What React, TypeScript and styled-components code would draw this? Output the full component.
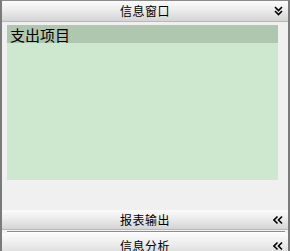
import React from "react";
import styled, { createGlobalStyle } from "styled-components";

const Global = createGlobalStyle`
  html, body { margin: 0; padding: 0; background: #f0f0f0; }
  body { font-family: "Noto Sans CJK SC", "Noto Sans", sans-serif; }
`;

const Frame = styled.div`
  width: 290px;
  height: 251px;
  box-sizing: border-box;
  border-left: 2px solid #7a7a7a;
  border-right: 2px solid #7a7a7a;
  border-top: 1px solid #8a8a8a;
  display: flex;
  flex-direction: column;
  overflow: hidden;
  background: #f0f0f0;
`;

const Header = styled.div<{ $h: number }>`
  position: relative;
  height: ${(p) => p.$h}px;
  flex: none;
  display: flex;
  align-items: center;
  justify-content: center;
  background: linear-gradient(to bottom, #fbfbfb 0%, #ececec 45%, #d4d4d4 100%);
  border-bottom: 1px solid #b8b8b8;
  font-size: 12px;
  line-height: 1;
  color: #000;
  letter-spacing: 0.5px;
`;

const Chevron = styled.span`
  position: absolute;
  right: 5px;
  top: 50%;
  transform: translateY(-50%);
  display: flex;
`;

const Body = styled.div`
  height: 188px;
  flex: none;
  box-sizing: border-box;
  padding: 3px 10px 0 5px;
  display: flex;
  flex-direction: column;
`;

const Panel = styled.div`
  height: 155px;
  background: #cee8d0;
  display: flex;
  flex-direction: column;
`;

const Row = styled.div<{ $selected?: boolean }>`
  height: 18px;
  background: ${(p) => (p.$selected ? "#afc7af" : "transparent")};
  display: flex;
  align-items: center;
  padding-left: 3px;
  font-size: 15px;
  color: #000;
`;

const Separator = styled.div`
  height: 3px;
  flex: none;
  padding: 0 3px 0 5px;
  display: flex;
  align-items: center;
  background: #f2f2f2;
  &::after {
    content: "";
    flex: 1;
    height: 1px;
    background: #8c8c8c;
    box-shadow: 0 1px 0 #ffffff;
  }
`;

const DownIcon = () => (
  <svg width="9" height="10" viewBox="0 0 9 10">
    <path d="M1 1 L4.5 4.5 L8 1 M1 5 L4.5 8.5 L8 5" fill="none" stroke="#000" strokeWidth="1.6" />
  </svg>
);

const LeftIcon = () => (
  <svg width="10" height="9" viewBox="0 0 10 9">
    <path d="M4.5 1 L1 4.5 L4.5 8 M9 1 L5.5 4.5 L9 8" fill="none" stroke="#000" strokeWidth="1.6" />
  </svg>
);

export default function App() {
  return (
    <>
      <Global />
      <Frame>
        <Header $h={20}>
          信息窗口
          <Chevron><DownIcon /></Chevron>
        </Header>
        <Body>
          <Panel>
            <Row $selected>支出项目</Row>
          </Panel>
        </Body>
        <Header $h={19}>
          报表输出
          <Chevron><LeftIcon /></Chevron>
        </Header>
        <Separator />
        <Header $h={25}>
          信息分析
          <Chevron><LeftIcon /></Chevron>
        </Header>
      </Frame>
    </>
  );
}
